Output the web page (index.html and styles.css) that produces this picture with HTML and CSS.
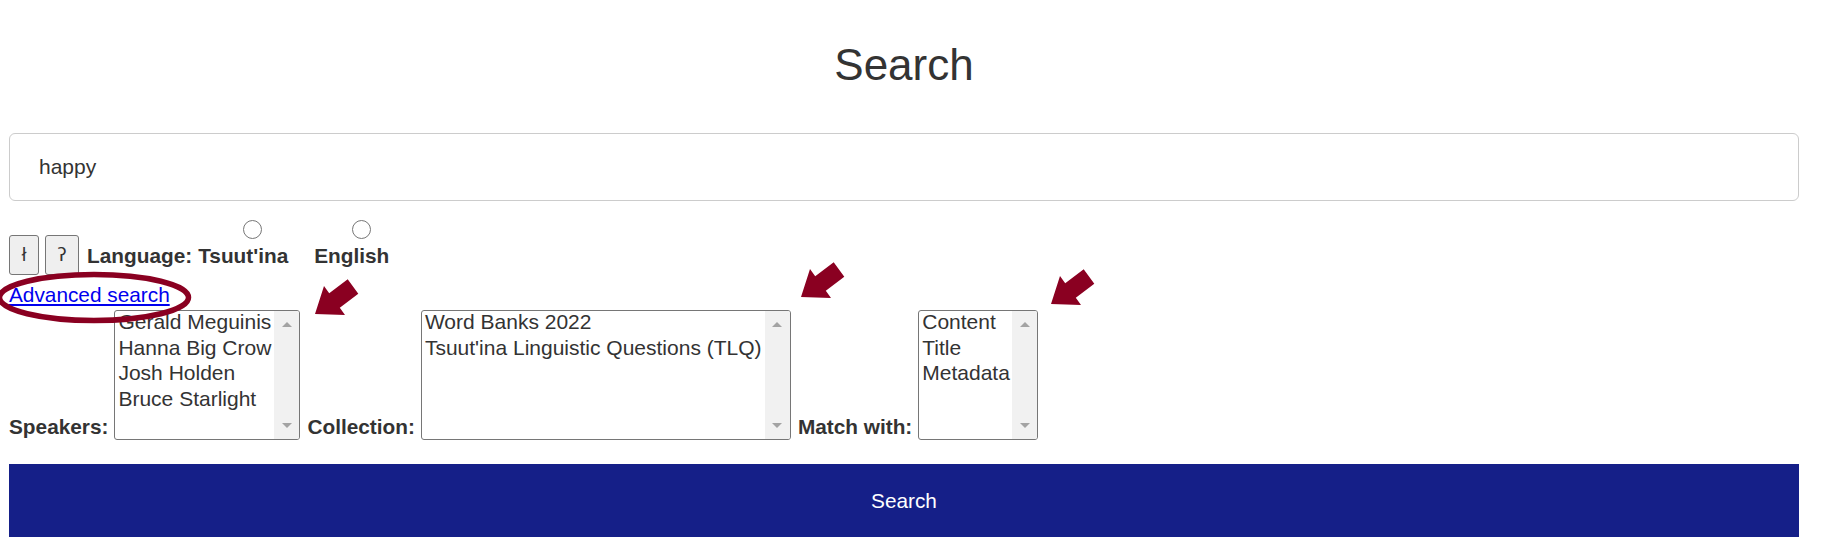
FILE: index.html
```html
<!DOCTYPE html>
<html lang="en">
<head>
<meta charset="utf-8">
<title>Search</title>
<link rel="stylesheet" href="styles.css">
</head>
<body>
<div class="page">
  <h1 class="title">Search</h1>
  <input class="query" type="text" value="happy">

  <div class="toolbar">
    <button class="char-btn btn-l" type="button">ł</button>
    <button class="char-btn btn-q" type="button">ʔ</button>
    <span class="lang-label">Language:</span>
    <label class="lang-opt lang-ts"><input class="radio" type="radio" name="lang"><span>Tsuut'ina</span></label>
    <label class="lang-opt lang-en"><input class="radio" type="radio" name="lang"><span>English</span></label>
  </div>

  <div class="adv-row"><a class="adv-link" href="#">Advanced search</a></div>

  <div class="filters">
    <span class="filter-label">Speakers:</span>
    <div class="listbox lb-speakers" role="listbox">
      <div class="lb-options">
        <div class="lb-option">Gerald Meguinis</div>
        <div class="lb-option">Hanna Big Crow</div>
        <div class="lb-option">Josh Holden</div>
        <div class="lb-option">Bruce Starlight</div>
      </div>
      <div class="lb-scroll"><span class="sb-btn"><span class="arrow-up"></span></span><span class="sb-btn"><span class="arrow-down"></span></span></div>
    </div>

    <span class="filter-label">Collection:</span>
    <div class="listbox lb-collection" role="listbox">
      <div class="lb-options">
        <div class="lb-option">Word Banks 2022</div>
        <div class="lb-option">Tsuut'ina Linguistic Questions (TLQ)</div>
      </div>
      <div class="lb-scroll"><span class="sb-btn"><span class="arrow-up"></span></span><span class="sb-btn"><span class="arrow-down"></span></span></div>
    </div>

    <span class="filter-label">Match with:</span>
    <div class="listbox lb-match" role="listbox">
      <div class="lb-options">
        <div class="lb-option">Content</div>
        <div class="lb-option">Title</div>
        <div class="lb-option">Metadata</div>
      </div>
      <div class="lb-scroll"><span class="sb-btn"><span class="arrow-up"></span></span><span class="sb-btn"><span class="arrow-down"></span></span></div>
    </div>
  </div>

  <button class="search-btn" type="button">Search</button>

  <svg class="annot annot-ellipse" width="200" height="56" viewBox="0 0 200 56">
    <ellipse cx="97" cy="27.5" rx="94.5" ry="23" fill="none" stroke="#8a0021" stroke-width="5.5"/>
  </svg>
  <svg class="annot arrow arrow-1" width="44" height="37" viewBox="0 0 44 37">
    <polygon points="0,35 30,36 24.8,28.8 43.3,14.7 32.7,0.3 14.2,14.2 9,7" fill="#8a0021"/>
  </svg>
  <svg class="annot arrow arrow-2" width="44" height="37" viewBox="0 0 44 37">
    <polygon points="0,35 30,36 24.8,28.8 43.3,14.7 32.7,0.3 14.2,14.2 9,7" fill="#8a0021"/>
  </svg>
  <svg class="annot arrow arrow-3" width="44" height="37" viewBox="0 0 44 37">
    <polygon points="0,35 30,36 24.8,28.8 43.3,14.7 32.7,0.3 14.2,14.2 9,7" fill="#8a0021"/>
  </svg>
</div>
</body>
</html>
```

FILE: styles.css
```css
html, body {
  margin: 0;
  padding: 0;
  background: #ffffff;
}

body {
  font-family: "Liberation Sans", Arial, sans-serif;
  font-size: 20.8px;
  color: #333333;
}

.page {
  position: relative;
  width: 1790px;
  margin-left: 9px;
  padding-top: 40px;
}

.title {
  margin: 0;
  font-size: 44px;
  font-weight: normal;
  line-height: 50px;
  text-align: center;
  color: #333333;
}

.query {
  display: block;
  box-sizing: border-box;
  width: 100%;
  height: 68px;
  margin: 43px 0 0 0;
  padding: 0 29px;
  border: 1px solid #cccccc;
  border-radius: 6px;
  font-family: "Liberation Sans", Arial, sans-serif;
  font-size: 21px;
  color: #333333;
  background: #ffffff;
  outline: none;
}

.toolbar {
  display: flex;
  align-items: flex-end;
  margin-top: 19px;
}

.char-btn {
  box-sizing: border-box;
  height: 40px;
  padding: 0;
  border: 1px solid #767676;
  border-radius: 3px;
  background: #efefef;
  color: #333333;
  font-family: "DejaVu Sans", "Liberation Sans", sans-serif;
  font-size: 18px;
  line-height: 1;
}

.btn-l {
  width: 30px;
}

.btn-q {
  width: 34px;
  margin-left: 6px;
}

.lang-label,
.lang-opt span {
  font-weight: bold;
  line-height: 24px;
}

.lang-label {
  margin-left: 8px;
  margin-right: 6px;
  margin-bottom: 7px;
}

.lang-opt {
  display: flex;
  flex-direction: column;
  align-items: center;
  margin-bottom: 7px;
}

.lang-en {
  margin-left: 26px;
}

.radio {
  appearance: none;
  -webkit-appearance: none;
  box-sizing: border-box;
  width: 19px;
  height: 19px;
  margin: 0 0 5px 19px;
  border: 1.5px solid #767676;
  border-radius: 50%;
  background: #ffffff;
}

.adv-row {
  margin-top: 8px;
  line-height: 24px;
}

.adv-link {
  color: #0000ee;
  text-decoration: underline;
}

.filters {
  display: flex;
  align-items: flex-end;
  column-gap: 6px;
  margin-top: 3px;
}

.filter-label {
  font-weight: bold;
  line-height: 24px;
  margin-bottom: 1px;
}

.lb-speakers + .filter-label,
.lb-collection + .filter-label {
  margin-left: 1px;
}

.listbox {
  box-sizing: border-box;
  display: flex;
  height: 130px;
  border: 1px solid #767676;
  border-radius: 3px;
  overflow: hidden;
  background: #ffffff;
}

.lb-speakers {
  width: 186px;
}

.lb-collection {
  width: 370px;
}

.lb-match {
  width: 120px;
}

.lb-options {
  flex: 1;
  margin-top: -2px;
  overflow: hidden;
}

.lb-option {
  padding: 0 3px;
  font-size: 21px;
  line-height: 25.7px;
  white-space: nowrap;
  color: #333333;
}

.lb-scroll {
  width: 25px;
  flex: none;
  display: flex;
  flex-direction: column;
  justify-content: space-between;
  background: #f1f1f1;
}

.sb-btn {
  display: flex;
  align-items: center;
  justify-content: center;
  height: 27px;
}

.arrow-up {
  width: 0;
  height: 0;
  border-left: 5.5px solid transparent;
  border-right: 5.5px solid transparent;
  border-bottom: 5px solid #a3a3a3;
}

.arrow-down {
  width: 0;
  height: 0;
  border-left: 5.5px solid transparent;
  border-right: 5.5px solid transparent;
  border-top: 5px solid #a3a3a3;
}

.search-btn {
  display: block;
  width: 100%;
  height: 73px;
  margin-top: 24px;
  border: none;
  background: #151f88;
  color: #ffffff;
  font-family: "Liberation Sans", Arial, sans-serif;
  font-size: 20.8px;
}

.annot {
  position: absolute;
  overflow: visible;
  pointer-events: none;
}

.annot-ellipse {
  left: -12px;
  top: 270px;
}

.arrow-1 {
  left: 306px;
  top: 279px;
}

.arrow-2 {
  left: 792px;
  top: 262px;
}

.arrow-3 {
  left: 1042px;
  top: 269px;
}
```
